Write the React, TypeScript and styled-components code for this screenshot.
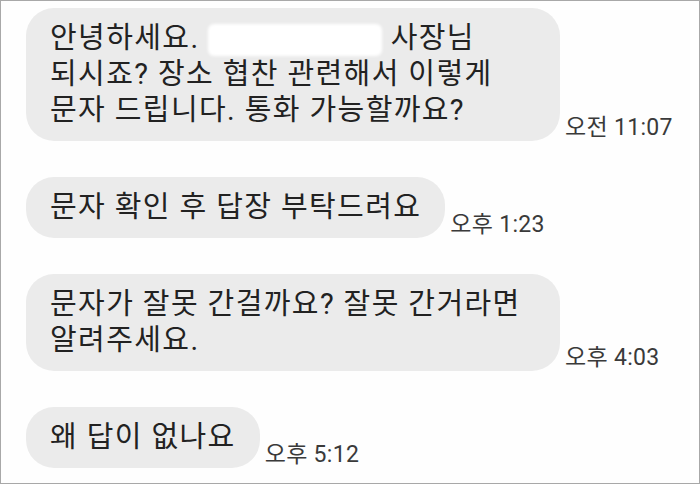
import React from "react";
import styled, { createGlobalStyle } from "styled-components";

const GlobalStyle = createGlobalStyle`
  html, body {
    margin: 0;
    padding: 0;
    background: #ffffff;
  }
`;

const Frame = styled.div`
  width: 700px;
  height: 484px;
  box-sizing: border-box;
  border: 1px solid #a8a8a8;
  background: #fefefe;
  padding: 7px 0 0 25px;
  display: flex;
  flex-direction: column;
  gap: 36px;
  font-family: "Roboto", "Noto Sans CJK KR", sans-serif;
  overflow: hidden;
`;

const Row = styled.div`
  display: flex;
  align-items: flex-end;
  gap: 5px;
`;

const Bubble = styled.div<{ $width?: number }>`
  box-sizing: border-box;
  width: ${(p) => (p.$width ? `${p.$width}px` : "auto")};
  background: #ebebeb;
  border-radius: 28px;
  padding: 12px 24px 13px 24px;
  font-size: 29px;
  letter-spacing: 1.4px;
  line-height: 36px;
  color: #222222;
  white-space: nowrap;
`;

const Time = styled.span`
  font-size: 23px;
  letter-spacing: 0.3px;
  line-height: 22px;
  padding-bottom: 2px;
  color: #3a3a3a;
  white-space: nowrap;
`;

const Redacted = styled.span`
  display: inline-block;
  width: 174px;
  height: 32px;
  vertical-align: middle;
  background: #ffffff;
  border-radius: 6px;
  filter: blur(1.5px);
`;

const App = () => {
  return (
    <>
      <GlobalStyle />
      <Frame>
        <Row>
          <Bubble $width={534}>
            안녕하세요. <Redacted /> 사장님
            <br />
            되시죠? 장소 협찬 관련해서 이렇게
            <br />
            문자 드립니다. 통화 가능할까요?
          </Bubble>
          <Time>오전 11:07</Time>
        </Row>
        <Row>
          <Bubble>문자 확인 후 답장 부탁드려요</Bubble>
          <Time>오후 1:23</Time>
        </Row>
        <Row>
          <Bubble $width={534}>
            문자가 잘못 간걸까요? 잘못 간거라면
            <br />
            알려주세요.
          </Bubble>
          <Time>오후 4:03</Time>
        </Row>
        <Row>
          <Bubble>왜 답이 없나요</Bubble>
          <Time>오후 5:12</Time>
        </Row>
      </Frame>
    </>
  );
};

export default App;
